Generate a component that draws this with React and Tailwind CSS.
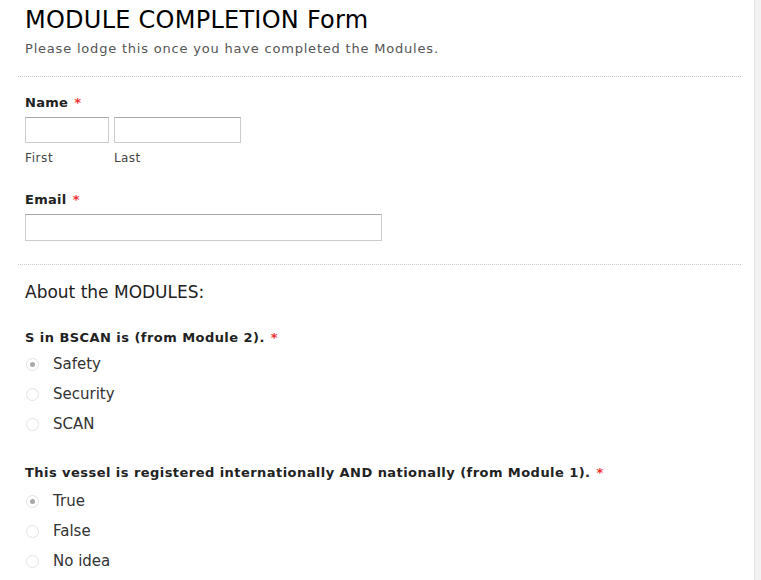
import React, { useState } from "react";

const Req = () => <span className="text-[#e33] ml-[6px]">*</span>;

const Radio = ({ label, checked, onClick }) => (
  <div onClick={onClick} className="flex items-center h-[30px] cursor-pointer">
    <div className="w-[13px] h-[13px] ml-[26px] rounded-full border border-[#e3e3e3] bg-white flex items-center justify-center">
      {checked && <div className="w-[5px] h-[5px] rounded-full bg-[#a8a8a8]" />}
    </div>
    <span className="ml-[14px] text-[15px] text-[#333]">{label}</span>
  </div>
);

const Question = ({ title, options, gap = "mt-[2px]" }) => {
  const [picked, setPicked] = useState(0);
  return (
    <div>
      <div className="px-[25px] text-[13px] font-bold tracking-[0.45px] text-[#222] h-[20px] leading-[20px]">
        {title}
        <Req />
      </div>
      <div className={gap}>
        {options.map((opt, i) => (
          <Radio key={opt} label={opt} checked={picked === i} onClick={() => setPicked(i)} />
        ))}
      </div>
    </div>
  );
};

const App = () => {
  return (
    <div className="flex h-[580px] overflow-hidden bg-white font-['DejaVu_Sans',sans-serif]">
      <div className="flex-1">
        <div className="px-[25px] pt-[5px]">
          <h1 className="text-[24px] leading-[30px] tracking-[0.25px] text-black">MODULE COMPLETION Form</h1>
          <p className="text-[13px] leading-[20px] tracking-[0.8px] text-[#555] mt-[4px]">
            Please lodge this once you have completed the Modules.
          </p>
        </div>
        <div className="ml-[18px] mr-[13px] mt-[17px] border-t border-dotted border-[#c8c8c8]" />

        <div className="px-[25px] mt-[16px]">
          <div className="text-[13px] font-bold tracking-[0.3px] text-[#222] h-[20px] leading-[20px]">
            Name
            <Req />
          </div>
          <div className="flex gap-[5px] mt-[4px]">
            <div>
              <input className="w-[84px] h-[26px] border border-[#ccc] border-t-[#aaa] outline-none" />
              <div className="text-[12px] tracking-[0.6px] text-[#444] mt-[6px]">First</div>
            </div>
            <div>
              <input className="w-[127px] h-[26px] border border-[#ccc] border-t-[#aaa] outline-none" />
              <div className="text-[12px] tracking-[0.4px] text-[#444] mt-[6px]">Last</div>
            </div>
          </div>

          <div className="text-[13px] font-bold tracking-[0.3px] text-[#222] h-[20px] leading-[20px] mt-[23px]">
            Email
            <Req />
          </div>
          <input className="mt-[4px] w-[357px] h-[27px] border border-[#ccc] border-t-[#aaa] outline-none" />
        </div>

        <div className="ml-[18px] mr-[13px] mt-[23px] border-t border-dotted border-[#c8c8c8]" />

        <div className="px-[25px] mt-[16px] text-[17px] leading-[22px] text-[#222]">About the MODULES:</div>

        <div className="mt-[25px]">
          <Question title="S in BSCAN is (from Module 2)." options={["Safety", "Security", "SCAN"]} gap="mt-[1px]" />
        </div>
        <div className="mt-[24px]">
          <Question
            title="This vessel is registered internationally AND nationally (from Module 1)."
            options={["True", "False", "No idea"]}
            gap="mt-[3px]"
          />
        </div>
      </div>
      <div className="w-[7px] bg-[#f3f3f3] border-l border-[#e6e6e6]" />
    </div>
  );
};

export default App;
